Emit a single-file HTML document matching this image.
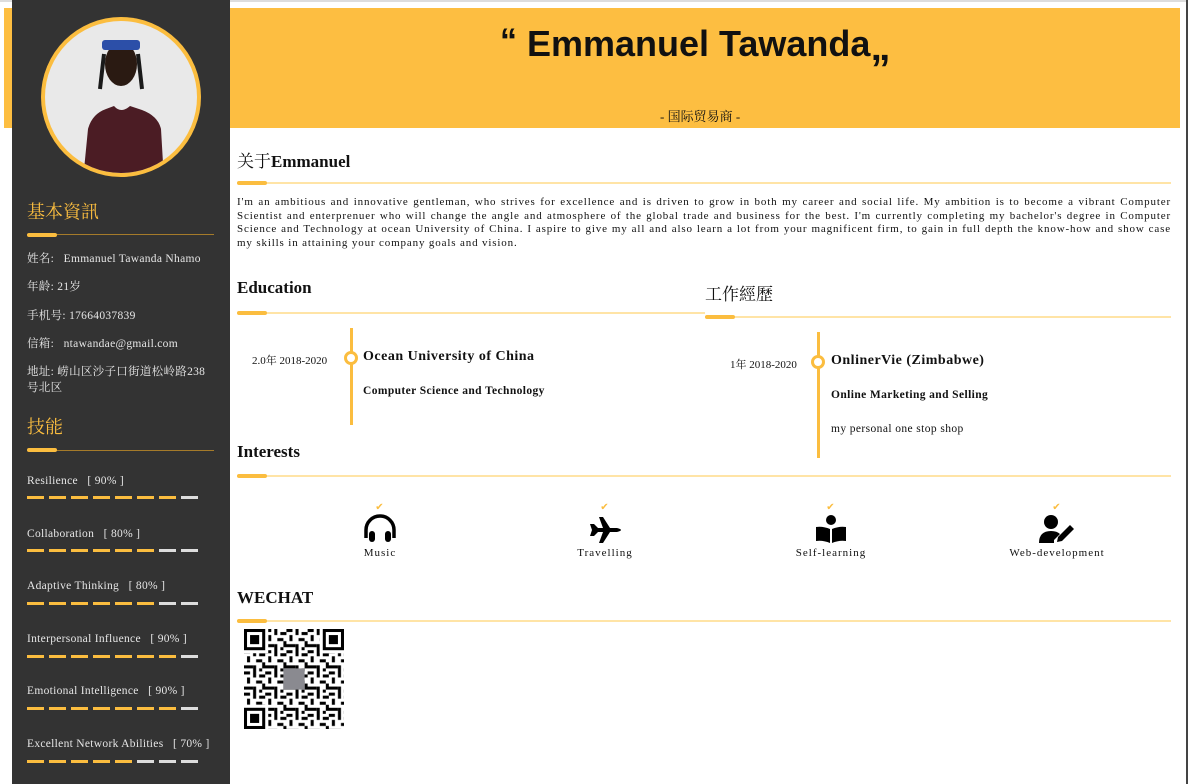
<!DOCTYPE html>
<html><head><meta charset="utf-8"><style>
*{margin:0;padding:0;box-sizing:border-box}
body{width:1188px;height:784px;background:#fff;position:relative;overflow:hidden;font-family:"Liberation Serif","Noto Serif CJK SC",serif;color:#111}
.a{position:absolute;white-space:nowrap}
.side{position:absolute;left:12px;top:0;width:218px;height:784px;background:#333}
.banner{position:absolute;left:4px;top:8px;width:1176px;height:120px;background:#fdbe41}
.sh{color:#fbbd3f;font-size:18px}
.si{color:#e6e6e6;font-size:11.5px;letter-spacing:0.3px}
.thick{position:absolute;height:4px;border-radius:2px;background:#fbbd3f}
.thin{position:absolute;height:2px;background:#ffe4a6}
h2{position:absolute;font-size:17px;font-weight:bold;white-space:nowrap}
.bars{position:absolute;left:27px;display:flex;gap:5px}
.bars i{display:block;width:17px;height:3px;background:#fbbd3f}
.bars i.w{background:#ddd}
.ic{position:absolute;text-align:center;width:140px;font-size:11px;letter-spacing:1px}
</style></head><body>
<div style="position:absolute;left:0;top:0;width:1188px;height:2px;background:#ddd"></div>
<div class="banner"></div>
<div style="position:absolute;right:0;top:0;width:2px;height:784px;background:#444"></div>
<div class="side"></div>
<div class="a" style="left:500px;top:22px;font-family:'Liberation Sans',sans-serif;font-weight:bold;font-size:36px"><span style="font-size:34px;vertical-align:4px">“</span> Emmanuel Tawanda<span style="font-size:40px;vertical-align:-4px">„</span></div>
<div class="a" style="left:660px;top:106px;font-size:13px">- 国际贸易商 -</div>

<svg class="a" style="left:38px;top:14px" width="166" height="166" viewBox="0 0 166 166">
<defs><clipPath id="c"><circle cx="83" cy="83" r="76"/></clipPath></defs>
<circle cx="83" cy="83" r="80" fill="#fbbd3f"/>
<g clip-path="url(#c)"><rect width="166" height="166" fill="#e9e9e9"/>
<path d="M45 166 L50 115 Q54 100 68 95 L76 92 Q83 100 92 92 L104 96 Q120 102 123 115 L126 166Z" fill="#4b1c24"/>
<ellipse cx="83" cy="50" rx="16" ry="22" fill="#2a1a12"/>
<rect x="64" y="26" width="38" height="10" rx="3" fill="#2c4fa8"/>
<path d="M66 40 L62 75 M100 40 L104 75" stroke="#1a1a1a" stroke-width="4"/>
</g></svg>

<div class="a sh" style="left:27px;top:198px">基本資訊</div>
<div style="position:absolute;left:27px;top:234px;width:187px;height:1px;background:#a57b2a"></div>
<div class="thick" style="left:27px;top:233px;width:30px"></div>
<div class="a si" style="left:27px;top:250px">姓名:&nbsp;&nbsp; Emmanuel Tawanda Nhamo</div>
<div class="a si" style="left:27px;top:278px">年龄: 21岁</div>
<div class="a si" style="left:27px;top:307px">手机号: 17664037839</div>
<div class="a si" style="left:27px;top:335px">信箱:&nbsp;&nbsp; ntawandae@gmail.com</div>
<div class="a si" style="left:27px;top:364px;white-space:normal;width:190px;line-height:16px">地址: 崂山区沙子口街道松岭路238号北区</div>
<div class="a sh" style="left:27px;top:413px">技能</div>
<div style="position:absolute;left:27px;top:450px;width:187px;height:1px;background:#a57b2a"></div>
<div class="thick" style="left:27px;top:448px;width:30px"></div>

<div class="a si" style="left:27px;top:475px">Resilience &nbsp;&nbsp;[ 90% ]</div>
<div class="bars" style="top:496px"><i></i><i></i><i></i><i></i><i></i><i></i><i></i><i class="w"></i></div>
<div class="a si" style="left:27px;top:528px">Collaboration &nbsp;&nbsp;[ 80% ]</div>
<div class="bars" style="top:549px"><i></i><i></i><i></i><i></i><i></i><i></i><i class="w"></i><i class="w"></i></div>
<div class="a si" style="left:27px;top:580px">Adaptive Thinking &nbsp;&nbsp;[ 80% ]</div>
<div class="bars" style="top:602px"><i></i><i></i><i></i><i></i><i></i><i></i><i class="w"></i><i class="w"></i></div>
<div class="a si" style="left:27px;top:633px">Interpersonal Influence &nbsp;&nbsp;[ 90% ]</div>
<div class="bars" style="top:655px"><i></i><i></i><i></i><i></i><i></i><i></i><i></i><i class="w"></i></div>
<div class="a si" style="left:27px;top:685px">Emotional Intelligence &nbsp;&nbsp;[ 90% ]</div>
<div class="bars" style="top:707px"><i></i><i></i><i></i><i></i><i></i><i></i><i></i><i class="w"></i></div>
<div class="a si" style="left:27px;top:738px">Excellent Network Abilities &nbsp;&nbsp;[ 70% ]</div>
<div class="bars" style="top:760px"><i></i><i></i><i></i><i></i><i></i><i class="w"></i><i class="w"></i><i class="w"></i></div>

<h2 style="left:237px;top:147px"><span style="font-weight:normal">关于</span>Emmanuel</h2>
<div class="thin" style="left:237px;top:182px;width:934px"></div>
<div class="thick" style="left:237px;top:181px;width:30px"></div>
<div class="a" style="left:237px;top:196px;width:934px;white-space:normal;font-size:11px;line-height:13.5px;letter-spacing:0.85px;text-align:justify">I'm an ambitious and innovative gentleman, who strives for excellence and is driven to grow in both my career and social life. My ambition is to become a vibrant Computer Scientist and enterprenuer who will change the angle and atmosphere of the global trade and business for the best. I'm currently completing my bachelor's degree in Computer Science and Technology at ocean University of China. I aspire to give my all and also learn a lot from your magnificent firm, to gain in full depth the know-how and show case my skills in attaining your company goals and vision.</div>

<h2 style="left:237px;top:278px">Education</h2>
<div class="thin" style="left:237px;top:312px;width:468px"></div>
<div class="thick" style="left:237px;top:311px;width:30px"></div>
<div style="position:absolute;left:350px;top:328px;width:3px;height:97px;background:#fbbd3f"></div>
<div style="position:absolute;left:344px;top:351px;width:14px;height:14px;border:3px solid #fbbd3f;border-radius:50%;background:#fff"></div>
<div class="a" style="left:252px;top:352px;font-size:11px">2.0年 2018-2020</div>
<div class="a" style="left:363px;top:349px;font-size:14px;font-weight:bold;letter-spacing:0.5px">Ocean University of China</div>
<div class="a" style="left:363px;top:385px;font-size:11.5px;font-weight:bold;letter-spacing:0.4px">Computer Science and Technology</div>

<h2 style="left:705px;top:280px;font-weight:normal">工作經歷</h2>
<div class="thin" style="left:705px;top:316px;width:466px"></div>
<div class="thick" style="left:705px;top:315px;width:30px"></div>
<div style="position:absolute;left:817px;top:332px;width:3px;height:126px;background:#fbbd3f"></div>
<div style="position:absolute;left:811px;top:355px;width:14px;height:14px;border:3px solid #fbbd3f;border-radius:50%;background:#fff"></div>
<div class="a" style="left:730px;top:356px;font-size:11px">1年 2018-2020</div>
<div class="a" style="left:831px;top:353px;font-size:14px;font-weight:bold;letter-spacing:0.5px">OnlinerVie (Zimbabwe)</div>
<div class="a" style="left:831px;top:389px;font-size:11.5px;font-weight:bold;letter-spacing:0.4px">Online Marketing and Selling</div>
<div class="a" style="left:831px;top:423px;font-size:11.5px;letter-spacing:0.4px">my personal one stop shop</div>

<h2 style="left:237px;top:442px">Interests</h2>
<div class="thin" style="left:237px;top:475px;width:934px"></div>
<div class="thick" style="left:237px;top:474px;width:30px"></div>

<div class="ic" style="left:310px;top:502px"><div style="color:#fbbd3f;font-size:10px;line-height:12px">✔</div>
<svg width="34" height="30" viewBox="0 0 34 30"><path d="M3 24 V16 A14 14 0 0 1 31 16 V24" fill="none" stroke="#000" stroke-width="3.5"/><rect x="6" y="17" width="6" height="11" rx="3"/><rect x="22" y="17" width="6" height="11" rx="3"/></svg>
<div>Music</div></div>
<div class="ic" style="left:535px;top:502px"><div style="color:#fbbd3f;font-size:10px;line-height:12px">✔</div>
<svg width="34" height="30" viewBox="0 0 34 30"><path d="M2 10 L6 10 L10 14 L15 14 L11 3 L15 3 L22 14 L29 14 Q33 15 33 16 Q33 17 29 18 L22 18 L15 29 L11 29 L15 18 L10 18 L6 22 L2 22 L4 16Z"/></svg>
<div>Travelling</div></div>
<div class="ic" style="left:761px;top:502px"><div style="color:#fbbd3f;font-size:10px;line-height:12px">✔</div>
<svg width="34" height="30" viewBox="0 0 34 30"><circle cx="17" cy="6" r="5"/><path d="M2 13 Q9 12 16 15 V29 Q9 26 2 27Z M18 15 Q25 12 32 13 V27 Q25 26 18 29Z"/></svg>
<div>Self-learning</div></div>
<div class="ic" style="left:987px;top:502px"><div style="color:#fbbd3f;font-size:10px;line-height:12px">✔</div>
<svg width="40" height="30" viewBox="0 0 40 30"><circle cx="14" cy="8" r="7"/><path d="M2 29 Q2 17 14 17 Q20 17 23 20 L17 26 L17 29Z"/><path d="M20 28 L21 23 L33 11 L37 15 L25 27Z"/></svg>
<div>Web-development</div></div>

<h2 style="left:237px;top:588px">WECHAT</h2>
<div class="thin" style="left:237px;top:620px;width:934px"></div>
<div class="thick" style="left:237px;top:619px;width:30px"></div>

<svg class="a" style="left:244px;top:629px" width="100" height="100" viewBox="0 0 33 33">
<defs><pattern id="q" width="7" height="7" patternUnits="userSpaceOnUse">
<rect x="0" y="0" width="2" height="1"/><rect x="3" y="0" width="1" height="2"/><rect x="5" y="1" width="2" height="1"/><rect x="1" y="2" width="1" height="2"/><rect x="4" y="3" width="2" height="1"/><rect x="0" y="5" width="3" height="1"/><rect x="6" y="4" width="1" height="2"/><rect x="3" y="5" width="1" height="2"/><rect x="5" y="6" width="1" height="1"/></pattern></defs>
<rect width="33" height="33" fill="#fff"/>
<rect x="0" y="0" width="33" height="33" fill="url(#q)"/>
<g><rect x="0" y="0" width="8" height="8" fill="#fff"/><rect x="0.5" y="0.5" width="6" height="6" fill="none" stroke="#000"/><rect x="2" y="2" width="3" height="3"/>
<rect x="25" y="0" width="8" height="8" fill="#fff"/><rect x="26.5" y="0.5" width="6" height="6" fill="none" stroke="#000"/><rect x="28" y="2" width="3" height="3"/>
<rect x="0" y="25" width="8" height="8" fill="#fff"/><rect x="0.5" y="26.5" width="6" height="6" fill="none" stroke="#000"/><rect x="2" y="28" width="3" height="3"/>
<rect x="13" y="13" width="7" height="7" fill="#8a8a90"/></g></svg>
</body></html>
